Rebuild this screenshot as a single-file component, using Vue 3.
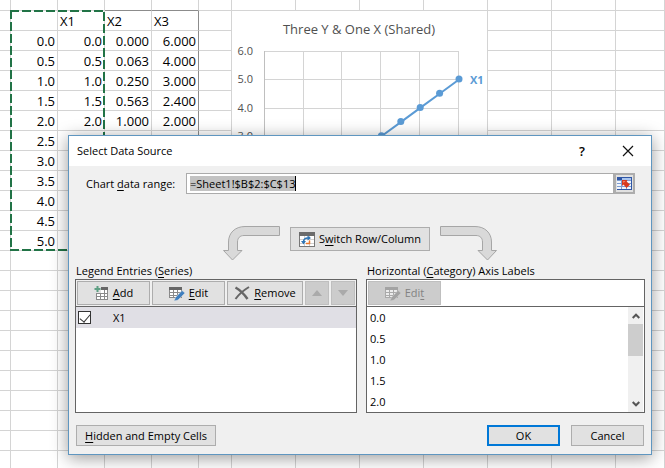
<script setup>
import { ref } from 'vue'

const axis = ['0.0', '0.5', '1.0', '1.5', '2.0', '2.5', '3.0', '3.5', '4.0', '4.5', '5.0']
const x2 = ['0.000', '0.063', '0.250', '0.563', '1.000']
const x3 = ['6.000', '4.000', '3.000', '2.400', '2.000']

const columns = 13
const blank = () => Array(columns).fill('')
const rows = [blank(), ['', '', 'X1', 'X2', 'X3', ...Array(8).fill('')]]
axis.forEach((v, i) => rows.push(['', v, i < x2.length ? v : '', x2[i] ?? '', x3[i] ?? '', ...Array(8).fill('')]))
while (rows.length < 25) rows.push(blank())

const points = axis.map((_, i) => ({ x: 34 + i * 19.4, y: 211.5 - i * 14.2 }))
const line = points.map(p => `${p.x},${p.y}`).join(' ')
const ticks = ['6.0', '5.0', '4.0', '3.0']

const range = ref('=Sheet1!$B$2:$C$13')
const shown = ref(true)
</script>

<template>
  <main class="sheet">
    <table class="grid">
      <colgroup>
        <col class="c-edge" />
        <col v-for="n in 4" :key="n" class="c-data" />
        <col class="c-gap" />
        <col v-for="n in 6" :key="'w' + n" class="c-wide" />
        <col />
      </colgroup>
      <tbody>
        <tr v-for="(row, r) in rows" :key="r" :class="{ first: r === 0 }">
          <td
            v-for="(cell, c) in row"
            :key="c"
            :class="{ head: r === 1, 'edge-top': r === 0 && (c === 3 || c === 4), 'edge-right': c === 4 && r > 0 && r < 13 }"
          >{{ cell }}</td>
        </tr>
      </tbody>
    </table>

    <svg class="ants" width="96" height="242" viewBox="0 0 96 242" fill="none" stroke="#217346" stroke-width="2" stroke-dasharray="9 3" aria-hidden="true">
      <path d="M0 1H95" />
      <path d="M1 0V241" />
      <path d="M94 2V241" />
      <path d="M0 240H95" />
    </svg>

    <svg class="chart" width="257" height="240" viewBox="0 0 257 240">
      <rect x=".5" y=".5" width="256" height="239" fill="#fff" stroke="#d4d4d4" />
      <text class="chart-title" x="128" y="24" text-anchor="middle">Three Y &amp; One X (Shared)</text>
      <g stroke="#d4d4d4">
        <path v-for="(t, i) in ticks" :key="t" :d="`M34 ${41.5 + Math.round(i * 28.3)}H228`" />
        <path v-for="i in 5" :key="i" :d="`M${Math.round(34 + i * 38.7) - 0.5} 41V212`" />
      </g>
      <path d="M33.5 41V212" stroke="#bfbfbf" />
      <text v-for="(t, i) in ticks" :key="'t' + t" class="tick" x="22" :y="45 + Math.round(i * 28.3)" text-anchor="end">{{ t }}</text>
      <polyline :points="line" fill="none" stroke="#5b9bd5" stroke-width="2" />
      <circle v-for="p in points" :key="p.x" :cx="p.x" :cy="p.y - 0.5" r="3.5" fill="#5b9bd5" />
      <text class="series" x="239" y="74">X1</text>
    </svg>

    <section class="dialog" role="dialog" aria-labelledby="dlg-title">
      <header class="titlebar">
        <h1 id="dlg-title">Select Data Source</h1>
        <button class="tb help" type="button">?</button>
        <button class="tb" type="button" aria-label="Close">
          <svg width="12" height="12" viewBox="0 0 12 12" stroke="#111" stroke-width="1.2"><path d="M1 1L11 11M11 1L1 11" /></svg>
        </button>
      </header>

      <div class="body">
        <div class="range-row">
          <label for="range">Chart <u>d</u>ata range:</label>
          <div class="range-box"><input id="range" v-model="range" type="text" spellcheck="false" /></div>
          <button class="picker" type="button" aria-label="Collapse dialog">
            <svg width="15" height="13" viewBox="0 0 15 13">
              <rect width="15" height="13" fill="#7d9cd0" />
              <path d="M0 0H15V1H0ZM0 0H5V3H0ZM14 0H15V13H14ZM0 12H15V13H0Z" fill="#2f56a5" />
              <path d="M5 1H14V3H5Z" fill="#a9c4ee" />
              <path d="M0 4H4V6H0ZM0 7H4V9H0ZM0 10H4V12H0ZM5 4H9V6H5ZM5 7H9V9H5ZM5 10H9V12H5ZM10 4H14V6H10ZM10 7H14V9H10ZM10 10H14V12H10Z" fill="#f1f5fc" />
              <path d="M5 3H10.500L9.500 4.500L13 7.500L9.500 11L6.500 7.500L5 9Z" fill="#d9391d" />
              <path d="M6 4H8.500L6.500 6Z" fill="#f08a6c" />
            </svg>
          </button>
        </div>

        <div class="switch-row">
          <svg width="58" height="36" viewBox="0 0 58 36" fill="#d9d9d9" stroke="#a6a6a6">
            <path d="M57.500 .5H23C13 .5 6.500 7 6.500 16V24.500H1.500L10.500 34L20 24.500H15.500V16C15.500 12 18 9.500 22 9.500H57.500Z" />
          </svg>
          <button class="btn switch" type="button">
            <svg width="16" height="15" viewBox="0 0 16 15">
              <rect x=".5" y=".5" width="15" height="14" fill="#fff" stroke="#777" />
              <rect width="16" height="4" fill="#6b6b6b" />
              <path d="M5.500 4V14M10.500 4V14M1 7.500H15M1 11.500H15" stroke="#d0d0d0" />
              <path d="M7 10.500H10.500V7.500" fill="none" stroke="#e8772e" stroke-width="1.500" transform="translate(0 1)" />
              <path d="M4.500 10C4.500 7 6 6 9 6" fill="none" stroke="#2f75b5" stroke-width="1.500" />
              <path d="M2 9H7L4.500 12.500ZM8.500 3.500L12 6L8.500 8.500Z" fill="#2f75b5" />
            </svg>
            <span>S<u>w</u>itch Row/Column</span>
          </button>
          <svg width="58" height="36" viewBox="0 0 58 36" fill="#d9d9d9" stroke="#a6a6a6">
            <path d="M.5 .5H35C45 .5 51.500 7 51.500 16V24.500H56.500L47.500 34L38 24.500H42.500V16C42.500 12 40 9.500 36 9.500H.5Z" />
          </svg>
        </div>

        <div class="panels">
          <section>
            <h2>Legend Entries (<u>S</u>eries)</h2>
            <div class="panel">
              <div class="toolbar">
                <button class="btn wide" type="button">
                  <svg width="15" height="15" viewBox="0 0 15 15">
                    <rect x="2.500" y="3.500" width="11" height="10" fill="#fff" stroke="#8a8a8a" />
                    <path d="M6 1H14V4H6Z" fill="#666" />
                    <path d="M6.500 4V13M10.500 4V13M3 7.500H13M3 10.500H13" stroke="#8a8a8a" />
                    <path d="M0 0H7V7H0Z" fill="#e1e1e1" />
                    <path d="M3.500 0V6M.5 3H6.500" stroke="#5fa084" stroke-width="2" />
                  </svg>
                  <span><u>A</u>dd</span>
                </button>
                <button class="btn wide" type="button">
                  <svg width="16" height="15" viewBox="0 0 16 15">
                    <rect x=".5" y="1.500" width="12" height="10" fill="#fff" stroke="#8a8a8a" />
                    <path d="M0 1H13V4H0Z" fill="#666" />
                    <path d="M4.500 4V12M8.500 4V12M1 6.500H12M1 9.500H12" stroke="#8a8a8a" />
                    <path d="M5 15L6.500 11.500L13 4.500L16 7L9 14Z" fill="#3f7fbf" stroke="#e1e1e1" stroke-width=".5" />
                  </svg>
                  <span><u>E</u>dit</span>
                </button>
                <button class="btn remove" type="button">
                  <svg width="16" height="14" viewBox="0 0 16 14" fill="none" stroke="#666">
                    <path d="M1.500 1.500C6 4 10 8 13.500 13" stroke-width="2.500" />
                    <path d="M15 1C10 4 5 8 1.500 13" stroke-width="2" />
                  </svg>
                  <span><u>R</u>emove</span>
                </button>
                <button class="btn move" type="button" disabled aria-label="Move up">
                  <svg width="10" height="6" viewBox="0 0 10 6" fill="#aaa"><path d="M5 0L10 6H0Z" /></svg>
                </button>
                <button class="btn move" type="button" disabled aria-label="Move down">
                  <svg width="10" height="6" viewBox="0 0 10 6" fill="#aaa"><path d="M5 6L10 0H0Z" /></svg>
                </button>
              </div>
              <div class="list">
                <label class="entry"><input v-model="shown" type="checkbox" /><span>X1</span></label>
              </div>
            </div>
          </section>

          <section>
            <h2>Horizontal (<u>C</u>ategory) Axis Labels</h2>
            <div class="panel">
              <div class="toolbar plain">
                <button class="btn wide" type="button" disabled>
                  <svg width="16" height="15" viewBox="0 0 16 15">
                    <rect x=".5" y="1.500" width="12" height="10" fill="#ececec" stroke="#aaa" />
                    <path d="M0 1H13V4H0Z" fill="#a3a3a3" />
                    <path d="M4.500 4V12M8.500 4V12M1 6.500H12M1 9.500H12" stroke="#aaa" />
                    <path d="M5 15L6.500 11.500L13 4.500L16 7L9 14Z" fill="#a3a3a3" stroke="#ccc" stroke-width=".5" />
                  </svg>
                  <span>Edi<u>t</u></span>
                </button>
              </div>
              <div class="list scroll">
                <ul>
                  <li v-for="v in axis.slice(0, 5)" :key="v">{{ v }}</li>
                </ul>
                <div class="scrollbar">
                  <button type="button" aria-label="Scroll up">
                    <svg width="8" height="6" viewBox="0 0 8 6" fill="none" stroke="#555" stroke-width="2"><path d="M.7 5L4 1.700L7.300 5" /></svg>
                  </button>
                  <div class="track"><div class="thumb"></div></div>
                  <button type="button" aria-label="Scroll down">
                    <svg width="8" height="6" viewBox="0 0 8 6" fill="none" stroke="#555" stroke-width="2"><path d="M.7 1L4 4.300L7.300 1" /></svg>
                  </button>
                </div>
              </div>
            </div>
          </section>
        </div>

        <footer>
          <button class="btn hidden-cells" type="button"><span><u>H</u>idden and Empty Cells</span></button>
          <button class="btn ok" type="button">OK</button>
          <button class="btn action" type="button">Cancel</button>
        </footer>
      </div>
    </section>
  </main>
</template>

<style>
body {
  margin: 0;
  background: #fff;
}
</style>

<style scoped>
* {
  box-sizing: border-box;
}
.sheet {
  position: relative;
  height: 100vh;
  overflow: hidden;
  font-family: "Open Sans", "Noto Sans", sans-serif;
  color: #000;
}
.grid {
  width: 100%;
  table-layout: fixed;
  border-collapse: separate;
  border-spacing: 0;
  font-size: 13px;
  line-height: 17px;
}
.c-edge { width: 11px; }
.c-data { width: 47px; }
.c-gap { width: 33px; }
.c-wide { width: 64px; }
.grid td {
  height: 20px;
  padding: 2px 2px 0;
  border-right: 1px solid #d4d4d4;
  border-bottom: 1px solid #d4d4d4;
  text-align: right;
  white-space: nowrap;
}
.grid .first td { height: 11px; padding: 0; }
.grid td.head { text-align: left; }
.grid td.edge-top { border-bottom-color: #8c8c8c; }
.grid td.edge-right { border-right-color: #8c8c8c; }
.ants {
  position: absolute;
  left: 10px;
  top: 10px;
}
.chart {
  position: absolute;
  left: 231px;
  top: 10px;
}
.chart-title { font-size: 13px; fill: #505050; }
.tick { font-size: 11px; fill: #505050; }
.series { font-size: 11px; font-weight: 700; fill: #5b9bd5; }

.dialog {
  position: absolute;
  left: 68px;
  right: 13px;
  top: 135px;
  border: 1px solid #5f96c0;
  background: #f0f0f0;
  box-shadow: 0 3px 16px rgba(0, 0, 0, 0.4);
  font-size: 11px;
  line-height: 16px;
}
.dialog button,
.dialog input {
  font: inherit;
  color: inherit;
}
.titlebar {
  display: flex;
  align-items: center;
  height: 30px;
  padding-left: 8px;
  background: #fff;
}
.titlebar h1 {
  flex: 1;
  margin: 0;
  font-size: 11px;
  font-weight: 400;
}
.tb {
  display: flex;
  align-items: center;
  justify-content: center;
  width: 46px;
  padding: 0;
  border: 0;
  background: none;
}
.titlebar .help { font-size: 13px; font-weight: 600; }
.body { padding: 7px 6px 8px; }
.range-row {
  display: flex;
  align-items: center;
  height: 21px;
  padding: 0 10px 0 11px;
}
.range-row label { width: 100px; }
.range-box {
  display: flex;
  flex: 1;
  align-items: center;
  height: 21px;
  padding-left: 3px;
  border: 1px solid #ababab;
  background: #fff;
}
.range-box input {
  width: 106px;
  height: 15px;
  padding: 0;
  border: 0;
  border-right: 1px solid #000;
  outline: 0;
  background: #c3c3c3;
}
.picker {
  display: flex;
  align-items: center;
  justify-content: center;
  width: 21px;
  height: 21px;
  padding: 0;
  border: 2px solid #adadad;
  background: #e1e1e1;
}
.switch-row {
  display: flex;
  justify-content: center;
  gap: 10px;
  height: 36px;
  margin-top: 32px;
}
.btn {
  display: flex;
  align-items: center;
  justify-content: center;
  gap: 4px;
  padding: 0;
  border: 1px solid #adadad;
  background: #e1e1e1;
  white-space: nowrap;
}
.switch {
  width: 140px;
  height: 24px;
  margin-top: 1px;
}
.panels {
  display: grid;
  grid-template-columns: 282fr 279fr;
  gap: 9px;
}
.panels h2 {
  margin: 0;
  padding: 1px 0 0 1px;
  font-size: 11px;
  line-height: 16px;
  font-weight: 400;
}
.panel {
  border: 1px solid #646464;
  background: #fff;
}
.toolbar {
  display: flex;
  gap: 2px;
  height: 27px;
  padding: 1px;
  border-bottom: 1px solid #646464;
  background: #f0f0f0;
}
.toolbar.plain { background: #fff; }
.toolbar .btn { height: 24px; }
.wide { width: 73px; }
.toolbar .remove { flex: 1; }
.move { width: 24px; }
.btn:disabled {
  border-color: #bfbfbf;
  background: #ccc;
  color: #838383;
}
.list {
  height: 105px;
}
.entry {
  display: flex;
  align-items: center;
  height: 21px;
  padding-left: 2px;
  background: #e0dfe5;
}
.entry input {
  display: flex;
  justify-content: center;
  width: 13px;
  height: 13px;
  margin: 0 22px 0 0;
  border: 1px solid #333;
  background: #fff;
  appearance: none;
}
.entry input:checked::after {
  content: "";
  width: 5px;
  height: 9px;
  border: solid #333;
  border-width: 0 1px 1px 0;
  transform: rotate(40deg);
}
.scroll { display: flex; }
.scroll ul {
  flex: 1;
  margin: 0;
  padding: 0 0 0 3px;
  list-style: none;
}
.scroll li { line-height: 21px; }
.scrollbar {
  display: flex;
  flex-direction: column;
  width: 15px;
  margin-right: 1px;
  background: #f0f0f0;
}
.scrollbar button {
  display: flex;
  align-items: center;
  justify-content: center;
  height: 17px;
  padding: 0;
  border: 0;
  background: none;
}
.track { flex: 1; }
.thumb {
  height: 32px;
  background: #cdcdcd;
}
footer {
  display: flex;
  gap: 11px;
  padding: 0 1px;
  margin-top: 12px;
}
footer .btn { height: 21px; }
.hidden-cells {
  width: 140px;
  margin-right: auto;
}
.ok,
.action { width: 73px; }
.ok { border: 2px solid #0078d7; }
u { text-underline-offset: 2px; }
</style>
